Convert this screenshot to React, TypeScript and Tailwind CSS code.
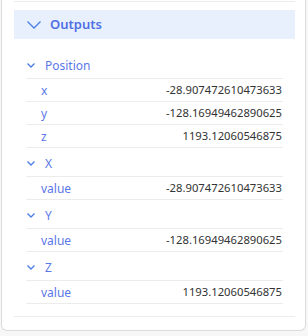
import React from "react";

const Chevron = ({ size, className }: { size: number; className?: string }) => (
  <svg width={size} height={size / 2 + 1} viewBox={`0 0 ${size} ${size / 2 + 1}`} className={className} fill="none">
    <polyline points={`0.5,0.5 ${size / 2},${size / 2} ${size - 0.5},0.5`} stroke="currentColor" strokeWidth="1.3" />
  </svg>
);

type Row = { k: string; v: string };
const groups: { name: string; rows: Row[] }[] = [
  { name: "Position", rows: [
    { k: "x", v: "-28.907472610473633" },
    { k: "y", v: "-128.16949462890625" },
    { k: "z", v: "1193.12060546875" },
  ] },
  { name: "X", rows: [{ k: "value", v: "-28.907472610473633" }] },
  { name: "Y", rows: [{ k: "value", v: "-128.16949462890625" }] },
  { name: "Z", rows: [{ k: "value", v: "1193.12060546875" }] },
];

export default function App() {
  return (
    <div className="h-[336px] w-[308px] bg-[#f7f7f7] pl-px pr-[2px] overflow-hidden" style={{ fontFamily: '"Noto Sans", sans-serif' }}>
      <div className="h-[331px] bg-white border-x border-b border-[#dcdcdc] rounded-b-[6px] pl-3 pr-[10px] flex flex-col">
        <div className="h-[2px] border-b border-[#ececec]" />
        <div className="mt-2 h-[29px] bg-[#e8f0fd] flex items-center pl-[13px] text-[#4f6fe3]">
          <Chevron size={14} className="text-[#4a7de8]" />
          <span className="ml-[9px] text-[13px] font-semibold">Outputs</span>
        </div>
        <div className="px-3 pt-[11px]">
          {groups.map((g) => (
            <div key={g.name}>
              <div className="h-[29px] flex items-center border-b border-[#ececec] pl-px pt-[3px]">
                <Chevron size={8} className="text-[#4a7de8]" />
                <span className="ml-[10px] text-[12px] text-[#5b78e8]">{g.name}</span>
              </div>
              {g.rows.map((r, i) => (
                <div key={i} className="h-[23px] flex items-center justify-between border-b border-[#ececec] pl-[15px] pr-px text-[11.25px] pt-px">
                  <span className="text-[#5b78e8] text-[12px]">{r.k}</span>
                  <span className="text-[#333]">{r.v}</span>
                </div>
              ))}
            </div>
          ))}
        </div>
        <div className="mt-[12px] border-b border-[#ececec]" />
      </div>
    </div>
  );
}
